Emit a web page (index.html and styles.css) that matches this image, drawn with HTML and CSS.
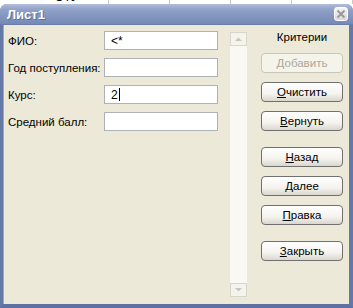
FILE: index.html
```html
<!DOCTYPE html>
<html lang="ru">
<head>
    <meta charset="UTF-8">
    <title>Лист1</title>
    <link rel="stylesheet" href="styles.css">
</head>
<body>
    <div class="sheet">
        <div class="cell first"><span class="peek">ЭТУ</span></div>
        <div class="cell"></div>
        <div class="cell"></div>
        <div class="cell"></div>
        <div class="cell"></div>
    </div>
    <div class="window">
        <div class="titlebar">
            <span class="title">Лист1</span>
            <span class="close">
                <svg width="10" height="10" viewBox="0 0 10 10">
                    <path d="M1.5 1.5 L8.5 8.5 M8.5 1.5 L1.5 8.5" stroke="#9a9a9a" stroke-width="2"/>
                </svg>
            </span>
        </div>
        <div class="body">
            <div class="fields">
                <div class="row"><label>ФИО:</label><div class="input">&lt;*</div></div>
                <div class="row"><label>Год поступления:</label><div class="input"></div></div>
                <div class="row"><label>Курс:</label><div class="input">2<span class="caret"></span></div></div>
                <div class="row"><label>Средний балл:</label><div class="input"></div></div>
            </div>
            <div class="scrollbar">
                <div class="arrow">
                    <svg width="7" height="4" viewBox="0 0 7 4"><path d="M0 4 L3.5 0.5 L7 4 Z" fill="#c9c6bb"/></svg>
                </div>
                <div class="track"></div>
                <div class="arrow">
                    <svg width="7" height="4" viewBox="0 0 7 4"><path d="M0 0 L3.5 3.5 L7 0 Z" fill="#c9c6bb"/></svg>
                </div>
            </div>
            <div class="actions">
                <div class="caption">Критерии</div>
                <button class="btn disabled">Добавить</button>
                <button class="btn"><u>О</u>чистить</button>
                <button class="btn"><u>В</u>ернуть</button>
                <button class="btn group"><u>Н</u>азад</button>
                <button class="btn"><u>Д</u>алее</button>
                <button class="btn"><u>П</u>равка</button>
                <button class="btn group"><u>З</u>акрыть</button>
            </div>
        </div>
    </div>
</body>
</html>
```
FILE: styles.css
```css
body {
    margin: 0;
    background: #ffffff;
    font-family: "Liberation Sans", Arial, sans-serif;
    font-size: 11.5px;
    color: #000;
    width: 353px;
    height: 308px;
    overflow: hidden;
}
.sheet {
    display: flex;
    height: 4px;
    overflow: hidden;
}
.cell {
    width: 63px;
    border-right: 1px solid #c8c8c8;
    position: relative;
}
.cell.first {
    width: 114px;
}
.peek {
    position: absolute;
    left: 55px;
    top: -10px;
    font-size: 12px;
}
.window {
    height: 304px;
    display: flex;
    flex-direction: column;
    border-radius: 7px 7px 0 0;
    background: #6d80ad;
    overflow: hidden;
}
.titlebar {
    height: 20px;
    flex: none;
    display: flex;
    align-items: center;
    justify-content: space-between;
    padding: 0 5px 0 7px;
    background: linear-gradient(to bottom, #b3bedb 0%, #93a3c9 25%, #8496bf 60%, #7689b5 100%);
    border-bottom: 1px solid #6b7ea9;
}
.title {
    color: #fff;
    font-weight: bold;
    font-size: 13px;
    text-shadow: 1px 1px 0 #5d6f99;
}
.close {
    width: 14px;
    height: 14px;
    border: 1px solid #fff;
    border-radius: 3px;
    background: linear-gradient(to bottom, #f4f4f4, #d8d8d8);
    display: flex;
    align-items: center;
    justify-content: center;
    box-sizing: border-box;
}
.body {
    flex: 1;
    display: flex;
    background: #ece9d8;
    border-left: 3px solid #6479a8;
    border-right: 4px solid #6479a8;
    border-bottom: 4px solid #5d72a2;
    box-shadow: inset 1px 0 0 #9aa8c8;
}
.fields {
    width: 210px;
    padding: 6px 0 0 5px;
    display: flex;
    flex-direction: column;
    gap: 8px;
}
.row {
    display: flex;
    align-items: center;
    justify-content: space-between;
    height: 19px;
}
.input {
    width: 114px;
    height: 19px;
    box-sizing: border-box;
    border: 1px solid #aeb2b6;
    background: #fff;
    padding: 2px 6px;
    line-height: 14px;
    font-size: 12px;
}
.caret {
    display: inline-block;
    width: 1px;
    height: 13px;
    background: #000;
    vertical-align: -2px;
    margin-left: 1px;
}
.scrollbar {
    margin: 7px 0 7px 12px;
    width: 17px;
    display: flex;
    flex-direction: column;
    background: #f9f8f3;
}
.arrow {
    height: 14px;
    border: 1px solid #d8d5ca;
    box-sizing: border-box;
    display: flex;
    align-items: center;
    justify-content: center;
    background: #f4f3ee;
}
.track {
    flex: 1;
}
.actions {
    margin-left: 14px;
    width: 82px;
    padding-top: 5px;
    display: flex;
    flex-direction: column;
    align-items: center;
}
.caption {
    height: 14px;
    line-height: 14px;
    margin-bottom: 9px;
}
.btn {
    width: 82px;
    height: 20px;
    margin-bottom: 9px;
    border: 1px solid #707070;
    border-radius: 4px;
    background: linear-gradient(to bottom, #ffffff 0%, #f4f3ee 60%, #d9d6cc 100%);
    font-family: "Liberation Sans", Arial, sans-serif;
    font-size: 11.5px;
    color: #000;
    padding: 0;
}
.btn.group {
    margin-top: 7px;
}
.btn.disabled {
    color: #aca899;
    border-color: #c9c7ba;
    background: #f5f4ea;
}
```
